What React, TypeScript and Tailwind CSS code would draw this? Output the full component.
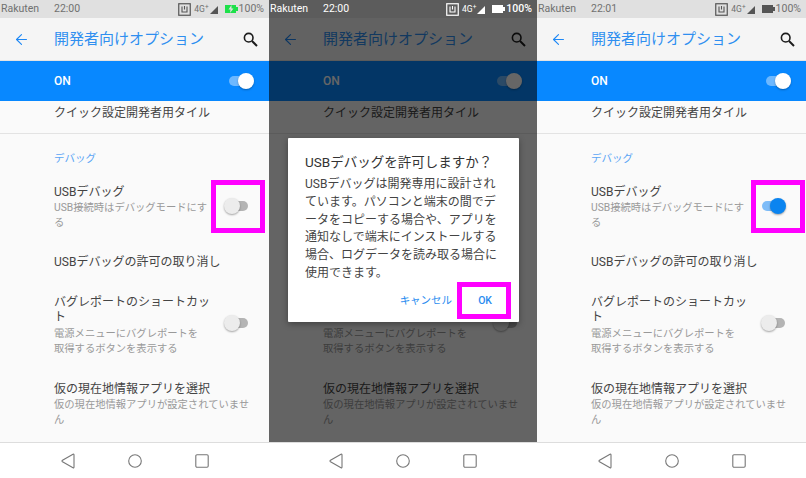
import { ArrowLeft } from "lucide-react";

const jp = "font-['Roboto','Noto_Sans_CJK_JP',sans-serif]";

function Toggle({ on, className = "" }: { on: boolean; className?: string }) {
  return (
    <div className={`relative h-[16px] w-[25px] shrink-0 ${className}`}>
      <div className={`absolute inset-x-[1px] top-[3px] h-[10px] rounded-full ${on ? "bg-[#7dbcf8]" : "bg-[#b4b4b4]"}`} />
      <div
        className={`absolute top-0 h-[16px] w-[16px] rounded-full shadow-[0_1px_2px_rgba(0,0,0,0.35)] ${
          on ? "right-0 bg-[#0a84f0]" : "left-0 bg-[#ececec]"
        }`}
      />
    </div>
  );
}

function NfcIcon({ color }: { color: string }) {
  return (
    <svg width="13" height="13" viewBox="0 0 13 13" fill="none" stroke={color}>
      <rect x="0.75" y="0.75" width="11.5" height="11.5" strokeWidth="1.2" />
      <path d="M4 3.5v5.5h5V3.5M6.5 3v3.5" strokeWidth="1.1" />
    </svg>
  );
}

function StatusBar({ time, mode }: { time: string; mode: "charging" | "dim" | "normal" }) {
  const dim = mode === "dim";
  const text = dim ? "text-white" : "text-[#707070]";
  const icon = dim ? "#ffffff" : "#555555";
  return (
    <div className={`flex h-[18px] items-center text-[10.5px] ${dim ? "bg-[#5c5c5c]" : "bg-[#e0e0e0]"} ${text}`}>
      <span className="ml-[1px] w-[53px]">Rakuten</span>
      <span>{time}</span>
      <div className="ml-auto mr-[5px] flex items-center">
        <NfcIcon color={icon} />
        <span className="ml-[3px] text-[8.5px]">4G</span>
        <span className="mb-[3px] text-[6.5px]">+</span>
        <svg width="9" height="9" viewBox="0 0 9 9" className="ml-[1px]">
          <path d="M0 9L8 1v8z" fill={icon} />
        </svg>
        <svg width="13" height="8" viewBox="0 0 13 8" className="ml-[6px]">
          <path d="M0 0h11v2h2v4h-2v2H0z" fill={mode === "charging" ? "#1ee04a" : icon} />
          {mode === "charging" && <path d="M6.5 0L3.5 4.5h2L5 8l3.5-4.5h-2z" fill="#e0e0e0" />}
        </svg>
        <span className={`ml-[1px] ${dim ? "font-medium" : ""}`}>100%</span>
      </div>
    </div>
  );
}

function NavBar() {
  return (
    <div className="flex h-[36px] items-center justify-center gap-[51px] border-t border-[#dddddd] bg-white">
      <svg width="16" height="16" viewBox="0 0 16 16" fill="none" stroke="#777777" strokeWidth="1.1">
        <path d="M14 2v12q0 1.2-1 .7L2.5 8.8q-1-.8 0-1.6L13 1.3q1-.5 1 .7z" />
      </svg>
      <svg width="16" height="16" viewBox="0 0 16 16" fill="none" stroke="#777777" strokeWidth="1.1">
        <circle cx="8" cy="8" r="6.3" />
      </svg>
      <svg width="16" height="16" viewBox="0 0 16 16" fill="none" stroke="#777777" strokeWidth="1.1">
        <rect x="1.8" y="1.8" width="12.4" height="12.4" rx="1.2" />
      </svg>
    </div>
  );
}

function Settings({ usbOn }: { usbOn: boolean }) {
  return (
    <>
      <div className="flex h-[42px] items-center bg-[#f5f5f5] pr-[11px]">
        <ArrowLeft size={17} strokeWidth={1.6} className="ml-[13px] text-[#1e88f5]" />
        <h1 className="ml-[24px] text-[15px] font-normal text-[#2f8ff0]">開発者向けオプション</h1>
        <svg width="15" height="15" viewBox="0 0 15 15" fill="none" stroke="#1c1c1c" className="ml-auto">
          <circle cx="5.7" cy="5.7" r="4.3" strokeWidth="1.6" />
          <path d="M9 9l5 5" strokeWidth="2" />
        </svg>
      </div>
      <div className="flex h-[41px] items-center justify-between border-t border-[#e3e3e3] bg-[#0888ff] pl-[54px] pr-[15px]">
        <span className="text-[12px] font-medium text-white">ON</span>
        <div className="relative h-[16px] w-[25px]">
          <div className="absolute inset-x-0 top-[3px] h-[10px] rounded-full bg-[#6db8ff]" />
          <div className="absolute right-0 top-0 h-[16px] w-[16px] rounded-full bg-white shadow-[0_1px_2px_rgba(0,0,0,0.3)]" />
        </div>
      </div>
      <div className="h-[341px] overflow-hidden bg-[#fafafa] pl-[54px] text-[12px] leading-[15px] text-[#444444]">
        <div className="-ml-[54px] h-[33px] border-b border-[#e3e3e3] pl-[54px] pt-[5px]">クイック設定開発者用タイル</div>
        <div className="pt-[17px] text-[10.5px] leading-[15px] text-[#5aa5f5]">デバッグ</div>
        <div className="mt-[19px] flex items-center">
          <div className="w-[157px]">
            <div>USBデバッグ</div>
            <div className="text-[10.3px] leading-[15px] text-[#999999]">USB接続時はデバッグモードにする</div>
          </div>
          <Toggle on={usbOn} className="-mt-[4px] ml-[13px]" />
        </div>
        <div className="mt-[25px]">USBデバッグの許可の取り消し</div>
        <div className="mt-[25px] flex items-center">
          <div className="w-[157px]">
            <div>バグレポートのショートカット</div>
            <div className="mt-[1px] w-[150px] text-[10.3px] leading-[15px] text-[#999999]">電源メニューにバグレポートを取得するボタンを表示する</div>
          </div>
          <Toggle on={false} className="-mt-[6px] ml-[13px]" />
        </div>
        <div className="mt-[26px] w-[202px]">
          <div>仮の現在地情報アプリを選択</div>
          <div className="text-[10.3px] leading-[15px] text-[#999999]">仮の現在地情報アプリが設定されていません</div>
        </div>
      </div>
    </>
  );
}

function Highlight({ className }: { className: string }) {
  return <div className={`absolute border-[5px] border-[#ff00ff] ${className}`} />;
}

function Dialog() {
  return (
    <div className="absolute left-[19px] top-[120px] h-[184px] w-[231px] rounded-[1px] bg-white px-[17px] pt-[15px] text-[#444444] shadow-[0_2px_6px_rgba(0,0,0,0.35)]">
      <div className="text-[13.5px] leading-[18px] text-[#333333]">USBデバッグを許可しますか？</div>
      <p className="mt-[5px] w-[198px] text-[12px] leading-[17.8px]">
        USBデバッグは開発専用に設計されています。パソコンと端末の間でデータをコピーする場合や、アプリを通知なしで端末にインストールする場合、ログデータを読み取る場合に使用できます。
      </p>
      <div className="absolute bottom-[14px] right-[27px] flex items-center gap-[26px] text-[10.5px] leading-[14px] text-[#2a8cf0]">
        <span>キャンセル</span>
        <span className="font-medium">OK</span>
      </div>
      <Highlight className="right-[8px] top-[144px] h-[37px] w-[54px]" />
    </div>
  );
}

export default function App() {
  return (
    <div lang="ja" className={`flex h-[478px] w-[806px] overflow-hidden bg-white ${jp}`}>
      <section className="relative w-[269px] shrink-0">
        <StatusBar time="22:00" mode="charging" />
        <Settings usbOn={false} />
        <NavBar />
        <Highlight className="left-[211px] top-[180px] h-[53px] w-[54px]" />
      </section>
      <section className="w-[268px] shrink-0">
        <StatusBar time="22:00" mode="dim" />
        <div className="relative">
          <Settings usbOn={true} />
          <div className="absolute inset-0 bg-black/60" />
          <Dialog />
        </div>
        <NavBar />
      </section>
      <section className="relative w-[269px] shrink-0">
        <StatusBar time="22:01" mode="normal" />
        <Settings usbOn={true} />
        <NavBar />
        <Highlight className="left-[214px] top-[180px] h-[53px] w-[54px]" />
      </section>
    </div>
  );
}
